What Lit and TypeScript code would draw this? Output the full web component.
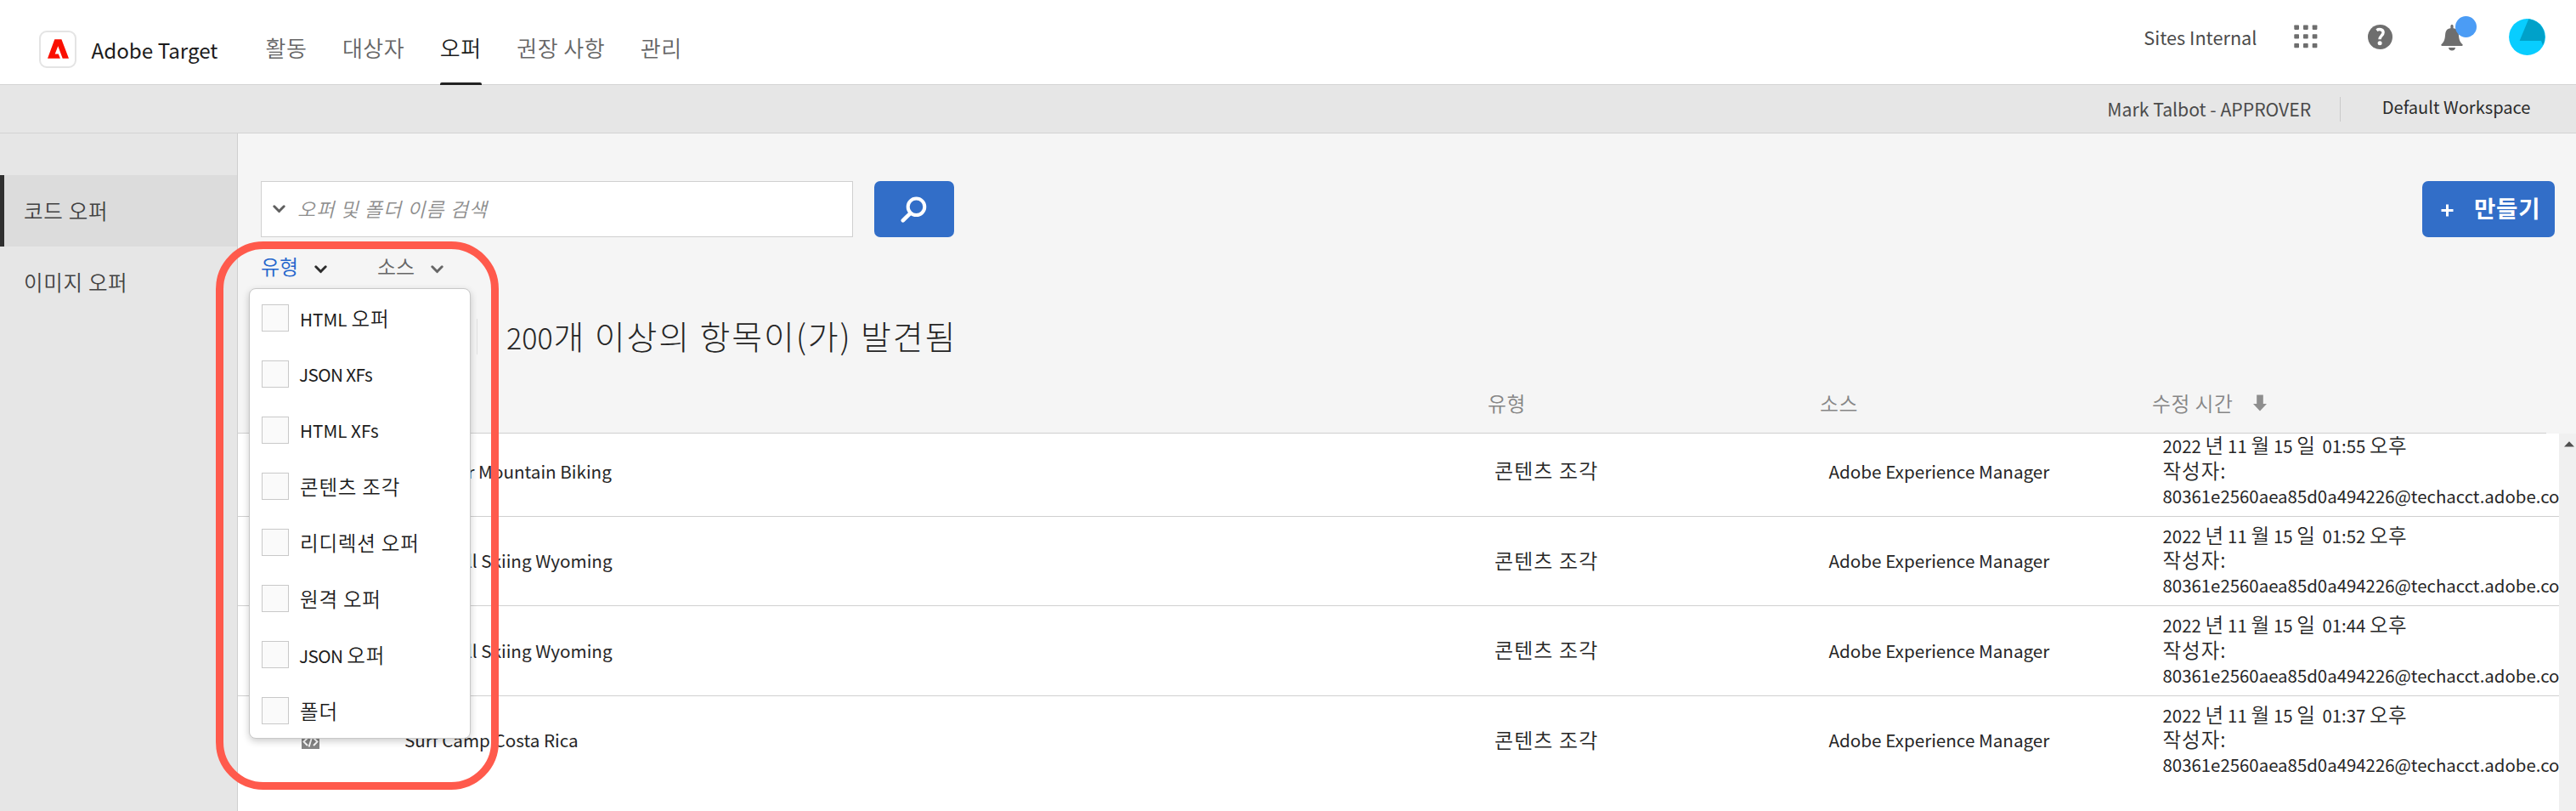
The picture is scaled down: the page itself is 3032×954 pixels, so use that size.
import { LitElement, html, css, svg } from "lit";
import { customElement, property } from "lit/decorators.js";
import { classMap } from "lit/directives/class-map.js";

interface Offer {
  name: string;
  time: string;
}

const NAV = ["활동", "대상자", "오퍼", "권장 사항", "관리"];
const FILTERS = [
  ["HTML", "오퍼"],
  ["JSON XFs", ""],
  ["HTML XFs", ""],
  ["", "콘텐츠 조각"],
  ["", "리디렉션 오퍼"],
  ["", "원격 오퍼"],
  ["JSON", "오퍼"],
  ["", "폴더"],
];
const OFFERS: Offer[] = [
  { name: "Summer Mountain Biking", time: "01:55" },
  { name: "Downhill Skiing Wyoming", time: "01:52" },
  { name: "Downhill Skiing Wyoming", time: "01:44" },
  { name: "Surf Camp Costa Rica", time: "01:37" },
];

const chevron = html`<svg class="chev" width="15" height="10" viewBox="0 0 15 10">
  <path d="M1.8 1.8 7.5 7.6 13.2 1.8" fill="none" stroke="currentColor" stroke-width="2.9" stroke-linecap="round" stroke-linejoin="round" />
</svg>`;

@customElement("top-bar")
class TopBar extends LitElement {
  static styles = css`
    :host { display: flex; justify-content: space-between; height: 100px; box-sizing: border-box; background: #fff; border-bottom: 1px solid #d3d3d3; }
    .left { display: flex; align-items: stretch; padding-left: 46px; }
    .logo { align-self: center; margin-top: 16px; width: 44px; height: 44px; box-sizing: border-box; border: 2px solid #e4e4e4; border-radius: 9px; display: flex; align-items: center; justify-content: center; }
    .brand { margin: 9px 0 0 17.5px; font-size: 24.2px; line-height: 100px; height: 90px; color: #1c1c1c; white-space: nowrap; width: 205px; }
    nav { display: flex; gap: 41.6px; }
    .tab { position: relative; font-size: 26px; font-weight: 350; letter-spacing: 0.5px; line-height: 100px; padding-top: 6px; height: 94px; color: #666; white-space: nowrap; overflow: hidden; }
    .tab.on { color: #1c1c1c; }
    .tab.on::after { content: ""; position: absolute; left: 0; right: 0; bottom: 0; height: 3px; background: #222; border-radius: 2px 2px 0 0; }
    .right { display: flex; align-items: center; height: 86px; padding-right: 36px; }
    .org { font-size: 21.7px; color: #4b4b4b; margin-right: 43.5px; white-space: nowrap; }
    .help { margin-left: 58.5px; }
    .bell { position: relative; display: flex; margin: 2px 54.5px 0 57px; }
    .dot { position: absolute; left: 17.5px; top: -9.5px; width: 25px; height: 25px; border-radius: 50%; background: #4b9cf5; }
  `;
  render() {
    return html`
      <div class="left">
        <div class="logo">
          <svg width="25" height="23" viewBox="0 0 25 23"><path fill="#fa0f00" d="M8.3.2h8.1L25 22.8h-7.3L12.3 8.2 8.7 17.4h4.1l2.1 5.4H0z" /></svg>
        </div>
        <div class="brand">Adobe Target</div>
        <nav>${NAV.map((t) => html`<div class=${classMap({ tab: true, on: t === "오퍼" })}>${t}</div>`)}</nav>
      </div>
      <div class="right">
        <div class="org">Sites Internal</div>
        <svg width="28" height="28" viewBox="0 0 28 28" fill="#6e6e6e">
          ${[0.5, 11.2, 21.9].map((y) => [0.3, 11, 21.7].map((x) => svg`<rect x=${x} y=${y} width="5.7" height="5.4" rx="0.8" />`))}
        </svg>
        <svg class="help" width="29" height="29" viewBox="0 0 29 29">
          <circle cx="14.5" cy="14.5" r="14.5" fill="#6e6e6e" />
          <path d="M10.4 6.6c2.8-1.9 7.7-1.2 7.7 2.6 0 3.2-4.1 4.2-4.1 8" fill="none" stroke="#fff" stroke-width="3.4" />
          <circle cx="14.1" cy="21.7" r="2.5" fill="#fff" />
        </svg>
        <div class="bell">
          <svg width="26" height="31" viewBox="0 0 26 31" fill="#6e6e6e">
            <path d="M11.4 1.6c0-2.1 3.2-2.1 3.2 0v2.6c4.2.3 6 3 6.3 7.5.4 5.2 1.1 8.4 4.4 11.4.6.6.6 1.9-.4 1.9H1.1c-1 0-1-1.3-.4-1.9 3.3-3 4-6.2 4.4-11.4.3-4.5 2.1-7.2 6.3-7.5z" />
            <path d="M9 27h8c-.3 4.7-7.7 4.7-8 0z" />
          </svg>
          <div class="dot"></div>
        </div>
        <svg width="43" height="43" viewBox="0 0 43 43">
          <circle cx="21.5" cy="21.5" r="21.4" fill="#08cdff" />
          <path d="M23.3.2 12.6 26H38l2 5.3A21.4 21.4 0 0 0 23.3.2z" fill="#00a1c9" />
        </svg>
      </div>
    `;
  }
}

@customElement("context-bar")
class ContextBar extends LitElement {
  static styles = css`
    :host { display: flex; justify-content: flex-end; align-items: center; height: 57px; box-sizing: border-box; background: #e6e6e6; border-bottom: 1px solid #d3d3d3; padding-right: 53.5px; white-space: nowrap; }
    .user { font-size: 21.2px; line-height: 30px; color: #4b4b4b; margin-top: -1px; }
    .ws { font-size: 20.1px; line-height: 30px; color: #2c2c2c; margin-top: -5px; }
    .sep { width: 1px; height: 29px; background: #cacaca; margin: 0 49px 0 33.5px; }
  `;
  render() {
    return html`<div class="user">Mark Talbot - APPROVER</div><div class="sep"></div><div class="ws">Default Workspace</div>`;
  }
}

@customElement("side-nav")
class SideNav extends LitElement {
  static styles = css`
    :host { display: block; box-sizing: border-box; width: 280px; padding-top: 49px; background: #e6e6e6; border-right: 1px solid #cfcfcf; }
    .item { height: 84px; line-height: 83px; box-sizing: border-box; padding-left: 28px; font-size: 24.5px; font-weight: 350; letter-spacing: 0.7px; color: #424242; }
    .item.on { background: #dcdcdc; border-left: 5px solid #2f2f2f; padding-left: 23px; }
  `;
  render() {
    return html`<div class="item on">코드 오퍼</div><div class="item">이미지 오퍼</div>`;
  }
}

@customElement("type-menu")
class TypeMenu extends LitElement {
  static styles = css`
    :host { display: block; box-sizing: border-box; width: 261px; height: 530px; padding: 1px 0 0 14px; background: #fff; border: 1px solid #c8c8c8; border-radius: 8px; box-shadow: 0 3px 9px rgba(0, 0, 0, 0.2); }
    .opt { display: flex; align-items: center; height: 66px; }
    .box { width: 32px; height: 32px; box-sizing: border-box; border: 1px solid #c9c9c9; background: #fafafa; }
    .lbl { display: flex; align-items: baseline; gap: 5px; margin-left: 13px; font-size: 20.7px; line-height: 40px; color: #1c1c1c; white-space: nowrap; }
    .json { letter-spacing: -0.6px; margin-left: -1px; }
    .k { font-size: 23.5px; font-weight: 350; letter-spacing: 0.8px; }
  `;
  render() {
    return FILTERS.map(
      ([latin, ko]) => html`<div class="opt">
        <div class="box"></div>
        <div class="lbl">
          ${latin ? html`<span class=${classMap({ json: latin.startsWith("JSON") })}>${latin}</span>` : ""}
          ${ko ? html`<span class="k">${ko}</span>` : ""}
        </div>
      </div>`
    );
  }
}

@customElement("offer-row")
class OfferRow extends LitElement {
  @property({ attribute: false }) offer!: Offer;
  static styles = css`
    :host { display: grid; grid-template-columns: 75px 121px 1283px 393.5px 393px 1fr; align-items: center; height: 105.5px; flex: none; box-sizing: border-box; border-bottom: 1px solid #d0d0d0; padding-bottom: 1px; font-size: 20.65px; color: #262626; white-space: nowrap; }
    :host(:last-child) { border-color: transparent; }
    .icon { grid-column: 2; display: block; margin-top: 1px; }
    .type { font-size: 24px; font-weight: 350; letter-spacing: 1.1px; margin-top: -2px; }
    .when { font-size: 20.4px; line-height: 29.6px; min-width: 0; }
    .line { height: 29.6px; }
    .date { display: flex; align-items: baseline; gap: 4.7px; }
    .time { margin-left: 3.5px; }
    .k { font-size: 23.5px; font-weight: 350; letter-spacing: 0.3px; }
    .by { letter-spacing: 1px; }
  `;
  render() {
    return html`
      <svg class="icon" width="21" height="21" viewBox="0 0 21 21">
        <rect width="21" height="21" fill="#858585" />
        <path d="M7 8 2.5 12.5 7 17M14 8l4.500 4.500L14 17M12.400 6.500 8.600 18.500" fill="none" stroke="#fff" stroke-width="1.900" />
      </svg>
      <div>${this.offer.name}</div>
      <div class="type">콘텐츠 조각</div>
      <div>Adobe Experience Manager</div>
      <div class="when">
        <div class="line date">
          <span>2022</span><span class="k">년</span><span>11</span><span class="k">월</span><span>15</span><span class="k">일</span>
          <span class="time">${this.offer.time}</span><span class="k">오후</span>
        </div>
        <div class="line"><span class="k by">작성자:</span></div>
        <div class="line">80361e2560aea85d0a494226@techacct.adobe.co</div>
      </div>
    `;
  }
}

@customElement("app-root")
class AppRoot extends LitElement {
  static styles = css`
    :host { display: flex; flex-direction: column; position: relative; width: 3032px; height: 954px; overflow: hidden; background: #f5f5f5; font-family: "Noto Sans CJK KR", "Noto Sans", sans-serif; font-weight: 400; }
    .body { display: flex; flex: 1; min-height: 0; }
    side-nav { flex: none; }
    main { flex: 1; min-width: 0; display: flex; flex-direction: column; }
    .search { display: flex; align-items: center; padding: 56px 25px 0 27px; height: 66px; flex: none; }
    .field { width: 697px; height: 66px; box-sizing: border-box; border: 1px solid #d0d0d0; background: #fff; display: flex; align-items: center; padding-left: 13px; color: #5f5f5f; }
    .ph { margin: -2px 0 0 14px; font-style: italic; font-size: 23px; letter-spacing: 1px; line-height: 40px; color: #8e8e8e; font-weight: 350; white-space: nowrap; }
    .go { width: 94px; height: 66px; margin-left: 25px; border-radius: 7px; background: #326ec8; display: flex; align-items: center; justify-content: center; }
    .create { margin-left: auto; width: 156px; height: 66px; box-sizing: border-box; border-radius: 7px; background: #326ec8; color: #fff; display: flex; align-items: center; padding: 0 0 4px 22px; font-weight: 700; font-size: 27.5px; letter-spacing: 0.8px; line-height: 60px; white-space: nowrap; }
    .plus { margin: 7px 24px 0 0; }
    .filters { display: flex; align-items: center; height: 68px; flex: none; padding-left: 27px; font-size: 24px; font-weight: 350; color: #666; }
    .filters .chev { margin-top: 7px; }
    .f1 { color: #2566cc; width: 63px; margin-top: -2px; }
    .c1 { color: #2c2c2c; display: flex; width: 74px; }
    .f2 { width: 63px; margin-top: -2px; }
    .c2 { display: flex; }
    .title { display: flex; align-items: center; height: 98px; flex: none; padding-left: 281px; color: #262626; white-space: nowrap; }
    .bar { width: 1px; height: 42px; background: #e0e0e0; margin-top: -1px; }
    h1 { margin: -2px 0 0 34px; font-weight: 300; font-size: 39px; letter-spacing: 1.85px; line-height: 60px; }
    .num { font-size: 34px; letter-spacing: 0; margin-right: 1px; }
    .thead { display: grid; grid-template-columns: 1471px 391px 391px 1fr; height: 65px; flex: none; box-sizing: border-box; border-bottom: 1px solid #d0d0d0; margin-right: 35px; line-height: 58px; font-size: 23.8px; font-weight: 350; letter-spacing: 0.5px; color: #868686; white-space: nowrap; }
    .sort { display: flex; align-items: center; gap: 24px; height: 58px; }
    .list { display: flex; flex: 1; min-height: 0; }
    .rows { flex: 1; min-width: 0; overflow: hidden; background: #fff; display: flex; flex-direction: column; justify-content: flex-start; }
    .rows > :first-child { margin-top: -8px; }
    .track { width: 20px; background: #f0f0f0; display: flex; justify-content: center; padding-top: 9px; }
    .track svg { margin-left: 3px; }
    .menu { position: absolute; left: 293px; top: 339px; }
    .mark { position: absolute; left: 254px; top: 284px; width: 333px; height: 645px; box-sizing: border-box; border: 9px solid #ff5a4c; border-radius: 56px; }
  `;
  render() {
    return html`
      <top-bar></top-bar>
      <context-bar></context-bar>
      <div class="body">
        <side-nav></side-nav>
        <main>
          <div class="search">
            <div class="field">${chevron}<div class="ph">오퍼 및 폴더 이름 검색</div></div>
            <div class="go">
              <svg width="32" height="32" viewBox="0 0 32 32" fill="none" stroke="#fff">
                <circle cx="18.5" cy="13.3" r="9.8" stroke-width="4" />
                <path d="M11.5 20.8 2.8 29.3" stroke-width="4.6" stroke-linecap="round" />
              </svg>
            </div>
            <div class="create">
              <svg class="plus" width="15" height="15" viewBox="0 0 15 15"><path d="M7.5.5v14M.5 7.5h14" stroke="#fff" stroke-width="3" /></svg>만들기
            </div>
          </div>
          <div class="filters">
            <div class="f1">유형</div>
            <div class="c1">${chevron}</div>
            <div class="f2">소스</div>
            <div class="c2">${chevron}</div>
          </div>
          <div class="title">
            <div class="bar"></div>
            <h1><span class="num">200</span>개 이상의 항목이(가) 발견됨</h1>
          </div>
          <div class="thead">
            <div></div>
            <div>유형</div>
            <div>소스</div>
            <div class="sort">수정 시간<svg width="16" height="20" viewBox="0 0 16 20" fill="#8e8e8e"><path d="M4.2.5h7.6v10.5H16L8 19.5 0 11h4.2z" /></svg></div>
          </div>
          <div class="list">
            <div class="rows">${OFFERS.map((o) => html`<offer-row .offer=${o}></offer-row>`)}</div>
            <div class="track">
              <svg width="12" height="7" viewBox="0 0 12 7"><path d="M0 6.5 6 .3l6 6.2z" fill="#505050" /></svg>
            </div>
          </div>
        </main>
      </div>
      <type-menu class="menu"></type-menu>
      <div class="mark"></div>
    `;
  }
}
